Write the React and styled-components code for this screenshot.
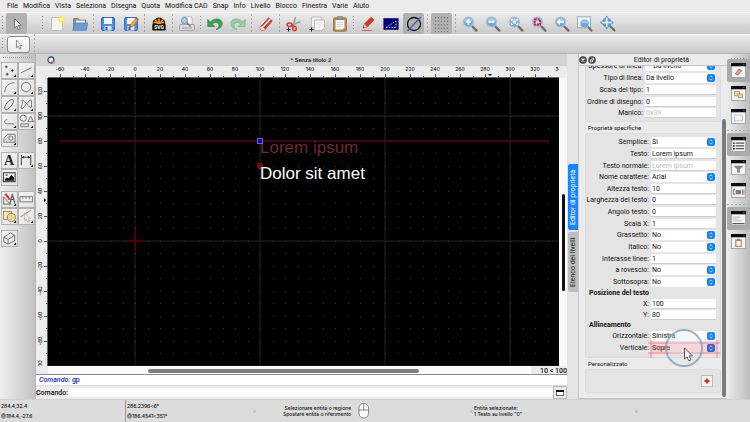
import React from "react";
import styled, { createGlobalStyle, css } from "styled-components";

const GlobalStyle = createGlobalStyle`
  *, *::before, *::after { box-sizing: border-box; }
  html, body { margin: 0; padding: 0; }
  body {
    font-family: Roboto, "Liberation Sans", sans-serif;
    font-size: 7px;
    line-height: 10px;
    color: #111;
    background: #ececec;
  }
  button, input, select { font: inherit; color: inherit; margin: 0; }
`;

const Window = styled.div`
  display: flex;
  flex-direction: column;
  height: 100vh;
  overflow: hidden;
`;

/* ---------- menu and tool bars ---------- */

const MenuBar = styled.nav`
  display: flex;
  gap: 5px;
  flex: none;
  height: 12px;
  padding: 0 7px;
  background: #ebebeb;
`;

const MenuButton = styled.button`
  padding: 0;
  border: 0;
  background: none;
  line-height: 11px;
  white-space: nowrap;
`;

const barSurface = css`
  display: flex;
  align-items: center;
  flex: none;
  background: linear-gradient(#ececec, #c9c9c9);
  border-top: 1px solid #f6f6f6;
`;

const ToolBar = styled.div`
  ${barSurface}
  height: 22px;
`;

const OptionsBar = styled.div`
  ${barSurface}
  height: 20px;
  border-bottom: 1px solid #b4b4b4;
`;

const Handle = styled.span`
  flex: none;
  width: 5px;
  height: ${(p) => (p.$short ? 12 : 15)}px;
  margin-left: ${(p) => (p.$spaced ? 12 : 0)}px;
  background: repeating-linear-gradient(#8e8e8e 0 1px, transparent 1px 3px) center / 1px 100% no-repeat;
`;

const Separator = styled.span`
  flex: none;
  width: 5px;
  height: 20px;
  background: repeating-linear-gradient(#a9a9a9 0 2px, transparent 2px 4px) center / 1px 100% no-repeat;
`;

const ToolButton = styled.button`
  display: grid;
  place-items: center;
  flex: none;
  width: 21px;
  height: 21px;
  margin: 0 1px;
  padding: 0;
  border: 0;
  border-radius: 2px;
  background: ${(p) => (p.$pressed ? "#b1b1b1" : "none")};
`;

const OptionButton = styled.button`
  display: grid;
  place-items: center;
  width: 23px;
  height: 17px;
  margin: 0 2px;
  padding: 0;
  border: 1px solid #8c8c8c;
  border-radius: 3px;
  background: linear-gradient(#ffffff, #e9e9e9);
`;

const Icon = styled.svg`
  display: block;
  width: ${(p) => p.$size || 16}px;
  height: ${(p) => p.$size || 16}px;
  overflow: visible;
`;

/* ---------- workspace ---------- */

const Workspace = styled.main`
  display: flex;
  flex: 1;
  min-height: 0;
`;

const Palette = styled.aside`
  display: flex;
  flex-direction: column;
  gap: 5px;
  flex: none;
  width: 36px;
  padding: 3px 1px 0;
  background: linear-gradient(90deg, #efefef, #c2c2c2);
  border-right: 1px solid #b5b5b5;
`;

const PaletteHandle = styled.span`
  height: 1px;
  margin: 0 2px -1px;
  background: repeating-linear-gradient(90deg, #999 0 1px, transparent 1px 2px);
`;

const PaletteGroup = styled.div`
  display: grid;
  grid-template-columns: 17px 17px;
  grid-auto-rows: 17px;
`;

const PaletteButton = styled.button`
  display: grid;
  place-items: center;
  padding: 0;
  border: 1px solid #b3b3b3;
  background: linear-gradient(135deg, #f4f4f4, #e2e2e2);
`;

const Documents = styled.section`
  display: flex;
  flex-direction: column;
  flex: 1;
  min-width: 0;
  background: #ececec;
`;

const DocumentTitle = styled.header`
  display: grid;
  grid-template-columns: 20px 1fr 12px;
  align-items: center;
  flex: none;
  height: 12px;
  padding-left: 11px;
  background: #d3d3d3;
  font-size: 6px;
  font-weight: 500;
  text-align: center;
`;

const DrawingGrid = styled.div`
  display: grid;
  grid-template: 12px minmax(0, 1fr) / 12px minmax(0, 1fr) 8px;
  flex: 1;
  min-height: 0;
`;

const Ruler = styled.svg`
  display: block;
  width: 100%;
  height: 100%;
  overflow: hidden;
  background: #ededed;
  font-family: Inter, "Liberation Sans", sans-serif;
  font-size: 5px;
  font-weight: 500;
  fill: #222;
`;

const Canvas = styled.svg`
  display: block;
  width: 100%;
  height: 100%;
  overflow: hidden;
  background: #000;
  font-family: "Liberation Sans", Arial, sans-serif;
  font-size: 17px;
`;

const VerticalScroll = styled.div`
  display: flex;
  flex-direction: column;
  padding: 0 2px 0 3px;
  background: #fafafa;
  &::before { content: ""; flex: 116; }
  &::after { content: ""; flex: 75; }
`;

const VerticalThumb = styled.span`
  flex: 97;
  border-radius: 2px;
  background: #111;
`;

const ScrollRow = styled.div`
  display: flex;
  flex: none;
  height: 9px;
  padding-left: 12px;
  border-bottom: 1px solid #8b8b8b;
`;

const HorizontalScroll = styled.div`
  display: flex;
  flex: 1;
  padding: 3px 0 1px;
  background: #fafafa;
  &::before { content: ""; flex: 100; }
  &::after { content: ""; flex: 112; }
`;

const HorizontalThumb = styled.span`
  flex: 271;
  border-radius: 2px;
  background: #7e7e7e;
`;

const GridInfo = styled.span`
  width: 36px;
  font-weight: 500;
  text-align: right;
  white-space: nowrap;
`;

const History = styled.div`
  flex: none;
  height: 10px;
  padding-left: 3px;
  background: #fff;
  color: #1c1cd0;
  font-weight: 500;
  em { font-style: italic; }
`;

const CommandLine = styled.div`
  display: flex;
  align-items: center;
  flex: none;
  height: 14px;
  border-top: 1px solid #ddd;
`;

const CommandLabel = styled.label`
  width: 33px;
  font-weight: 500;
`;

const CommandInput = styled.input`
  flex: 1;
  min-width: 0;
  height: 9px;
  padding: 0 2px;
  border: 0;
  background: #fff;
`;

const CommandButton = styled.button`
  display: grid;
  place-items: center;
  width: 14px;
  height: 13px;
  padding: 0;
  border: 1px solid #b5b5b5;
  background: #ececec;
`;

/* ---------- dock ---------- */

const DockTabs = styled.div`
  display: flex;
  flex-direction: column;
  gap: 2px;
  flex: none;
  width: 11px;
  padding-top: 110px;
  background: #e4e4e4;
`;

const DockTab = styled.button`
  align-self: flex-end;
  width: 10px;
  height: ${(p) => (p.$active ? 66 : 60)}px;
  padding: 0;
  border: 0;
  border-radius: 0 2px 2px 0;
  background: ${(p) => (p.$active ? "#1685ff" : "#bdbdbd")};
  color: ${(p) => (p.$active ? "#fff" : "#222")};
  writing-mode: vertical-rl;
  line-height: 10px;
  transform: rotate(180deg);
  white-space: nowrap;
`;

const Dock = styled.section`
  display: flex;
  flex-direction: column;
  flex: none;
  width: 149px;
  border-left: 1px solid #c8c8c8;
  border-bottom: 1px solid #c4c4c4;
  background: #ebebeb;
`;

const DockTitle = styled.header`
  display: grid;
  grid-template-columns: 17px 1fr;
  align-items: center;
  flex: none;
  height: 12px;
  border-bottom: 1px solid #c3c3c3;
  text-align: center;
`;

const DockButtons = styled.div`
  display: flex;
  gap: 1px;
`;

const DockButton = styled.button`
  padding: 0;
  border: 0;
  background: none;
`;

const DockBody = styled.div`
  display: flex;
  flex: 1;
  min-height: 0;
`;

const Properties = styled.form`
  display: flex;
  flex-direction: column;
  justify-content: flex-end;
  flex: 1;
  min-width: 0;
  padding: 0 0 5px 6px;
  overflow: hidden;
`;

const DockScroll = styled.div`
  display: flex;
  flex-direction: column;
  justify-content: flex-end;
  width: 6px;
  padding: 0 1px 1px;
`;

const DockThumb = styled.span`
  height: 84%;
  border-radius: 2px;
  background: #7c7c7c;
`;

const GroupTitle = styled.h2`
  flex: none;
  height: 11px;
  margin: 0;
  padding: 1px 0 0 3px;
  font-size: 6px;
  font-weight: 400;
`;

const GroupBox = styled.div`
  flex: none;
  padding: 3px 5px 4px 0;
  border-radius: 3px;
  background: #e4e4e4;
  box-shadow: inset 0 0 0 1px #dcdcdc;
`;

const CustomBox = styled(GroupBox)`
  display: flex;
  justify-content: flex-end;
  align-items: center;
  height: 24px;
  padding: 0 8px;
`;

const AddButton = styled.button`
  display: grid;
  place-items: center;
  width: 12px;
  height: 12px;
  padding: 0;
  border: 1px solid #bdbdbd;
  background: #f2f2f2;
`;

const Row = styled.div`
  display: grid;
  grid-template-columns: ${(p) => (p.$narrow ? 60 : 66)}px minmax(0, 1fr);
  align-items: center;
  height: ${(p) => (p.$tight ? 11 : 12)}px;
`;

const RowLabel = styled.label`
  padding-right: 2px;
  text-align: right;
  white-space: nowrap;
`;

const Subheading = styled.h3`
  height: 10px;
  margin: 0;
  padding-left: 4px;
  font-size: 7px;
  font-weight: 700;
`;

const TextField = styled.input`
  width: 100%;
  height: 10px;
  padding: 0 1px;
  border: 0;
  background: #fff;
  box-shadow: inset 0 -1px #cfcfcf;
  &:disabled { color: #bcbcbc; }
`;

const SelectWrap = styled.div`
  display: grid;
  align-items: center;
  position: relative;
  & > * { grid-area: 1 / 1; }
`;

const SelectField = styled.select`
  appearance: none;
  width: 100%;
  height: 10px;
  padding: 0 10px 0 1px;
  border: 0;
  border-radius: 2px;
  background: ${(p) => (p.$hot ? "#ffd0d2" : "#fff")};
`;

const Chevrons = styled.svg`
  justify-self: end;
  width: 8px;
  height: 8px;
  margin-right: 1px;
  pointer-events: none;
`;

const Highlight = styled.svg`
  position: absolute;
  inset: 50% auto auto 50%;
  width: 80px;
  height: 44px;
  margin: -22px 0 0 -40px;
  overflow: visible;
  pointer-events: none;
`;

const SideBar = styled.aside`
  display: flex;
  flex-direction: column;
  align-items: stretch;
  flex: none;
  width: 23px;
  padding-top: 4px;
  background: linear-gradient(90deg, #ececec, #bdbdbd);
`;

const SideHandle = styled.span`
  flex: none;
  height: 1px;
  margin: 0 4px;
  background: repeating-linear-gradient(90deg, #8e8e8e 0 1px, transparent 1px 3px);
`;

const SideSeparator = styled.span`
  flex: none;
  height: 5px;
  background: repeating-linear-gradient(90deg, #aaa 0 2px, transparent 2px 4px) center / 100% 1px no-repeat;
`;

const SideButton = styled.button`
  display: grid;
  place-items: center;
  flex: none;
  height: 23px;
  padding: 0;
  border: 0;
  border-radius: 2px;
  background: ${(p) => (p.$pressed ? "#ababab" : "none")};
`;

/* ---------- status bar ---------- */

const StatusBar = styled.footer`
  display: grid;
  grid-template-columns: 126fr 127fr 217fr 165fr 115fr;
  align-items: stretch;
  flex: none;
  height: 23px;
  background: #dcdcdc;
  border-top: 1px solid #d0d0d0;
  font-family: Inter, "Liberation Sans", sans-serif;
  font-size: 5px;
  font-weight: 500;
`;

const Coordinates = styled.div`
  display: flex;
  flex-direction: column;
  padding: 1px 0 1px 1px;
  border-right: ${(p) => (p.$divided ? 1 : 0)}px solid #999;
  line-height: 10px;
`;

const StatusCell = styled.div`
  display: flex;
  align-items: center;
  line-height: 6px;
  white-space: nowrap;
  &::before {
    content: "";
    flex: none;
    width: 3px;
    height: 3px;
    margin-right: 1px;
    border-radius: 2px;
    background: #c0c0c0;
  }
`;

const MouseHint = styled.div`
  display: flex;
  flex: 1;
  align-items: center;
  gap: 5px;
  padding-left: 26px;
  text-align: right;
`;

/* ---------- drawings ---------- */

const ArrowShape = () => (
  <path d="M5.5 2.5V12l2.3-2 1.6 3.7 1.6-.8-1.7-3.5h3z" fill="#fff" stroke="#666" strokeWidth=".9" />
);

const Lens = ({ children }) => (
  <>
    <path d="M10 10l4.4 4.6" stroke="#6e6e6a" strokeWidth="2.4" strokeLinecap="round" />
    <circle cx="6.4" cy="6" r="5" fill="#72a7e0" stroke="#a9bed2" strokeWidth="1.2" />
    <path d="M2.3 5.6a4.2 4.2 0 0 1 8.2 0z" fill="#a9ccf0" />
    {children}
  </>
);

const Floppy = () => (
  <>
    <rect x="1.5" y="1.5" width="13" height="13" rx="1.5" fill="#4b8fee" stroke="#3368c4" />
    <rect x="4" y="2" width="8" height="6" fill="#f4f7fc" />
    <rect x="4.5" y="10" width="7" height="4.5" fill="#dfe7f2" />
    <rect x="5.5" y="10.8" width="2" height="3.2" fill="#3d5f95" />
  </>
);

const icons = {
  arrow: <ArrowShape />,
  newFile: (
    <>
      <path d="M2.5 1.5h11v13h-11z" fill="#f4f4f1" stroke="#b7b7b3" strokeWidth=".8" />
      <circle cx="12.5" cy="3.5" r="3.2" fill="#f6ee2c" opacity=".9" />
      <circle cx="12.5" cy="3.5" r="1.5" fill="#fffde0" />
    </>
  ),
  open: (
    <>
      <path d="M1.5 13V2.5h5l1 1.5h6.5v9z" fill="#8b9095" stroke="#6f7479" strokeWidth=".7" />
      <path d="M4 4.5h9v4H4z" fill="#eee" />
      <path d="M.8 14.3L3 7h12.7l-1.4 7.3z" fill="#6a9fd6" stroke="#4b7db5" strokeWidth=".7" />
    </>
  ),
  save: <Floppy />,
  saveAs: (
    <>
      <Floppy />
      <path d="M6.5 11.5l.9-3L13.3 1.8l2.2 1.8-6 7z" fill="#f5a833" stroke="#b8651a" strokeWidth=".6" />
      <path d="M13.3 1.8l2.2 1.8-.9 1-2.2-1.8z" fill="#e05745" />
      <path d="M6.5 11.5l.5-1.6 1.1 1z" fill="#333" />
    </>
  ),
  svgExport: (
    <>
      <path d="M8 1.5c2 0 3 .8 3.500 2 2 .2 3 1.500 2.700 3.500v1.500H1.800V7c-.3-2 .7-3.300 2.700-3.500C5 2.300 6 1.500 8 1.500z" fill="#111" />
      <path d="M8 2.500V8M4.500 3.800L7 8M11.500 3.800L9 8M2.500 6.500h3M10.500 6.500h3" stroke="#f79c1d" strokeWidth="1.700" />
      <rect x="1.300" y="8" width="13.400" height="6.500" rx="1.200" fill="#111" />
      <text x="8" y="13" fontSize="5" fontWeight="700" textAnchor="middle" fill="#fff">SVG</text>
    </>
  ),
  preview: (
    <>
      <path d="M4 1h9v8H4z" fill="#fafafa" stroke="#aaa" strokeWidth=".7" />
      <path d="M1 8.500h14l.6 4.500c0 1-.4 1.500-1.500 1.500H2c-1 0-1.500-.5-1.500-1.500z" fill="#dcdcdc" stroke="#8f8f8f" strokeWidth=".7" />
      <path d="M3 12h10" stroke="#999" />
      <path d="M7.500 6.500l4 4" stroke="#777" strokeWidth="1.500" />
      <circle cx="5.500" cy="4.500" r="3" fill="#a9ccf1" stroke="#6f8cae" />
    </>
  ),
  undo: <path d="M.8 3.500v7h7L5.400 8.100c2.500-2.700 6.400-2.100 6.600 1.100.1 1.700-1 3-3 4.300 4-.6 6.400-3 6.200-6.200C14.900 2.700 8.200.8 3.300 6z" fill="#3fa452" stroke="#26803a" strokeWidth=".7" />,
  redo: <path d="M15.200 3.500v7h-7l2.400-2.400C8.100 5.400 4.200 6 4 9.200c-.1 1.700 1 3 3 4.300C3 12.900.6 10.500.8 7.300 1.100 2.700 7.800.8 12.700 6z" fill="#96cfa7" stroke="#6bb382" strokeWidth=".7" />,
  eraser: (
    <>
      <path d="M2 11.500L10.500 2l3.800 2.800L6.500 14l-3.500.3z" fill="#dc3535" stroke="#a92020" strokeWidth=".7" />
      <path d="M4 11.800l8.300-8.600" stroke="#fff" strokeWidth="1.500" />
      <path d="M2 11.500l1-1 4 2.500-.6 1-3.500.3z" fill="#f7dada" />
    </>
  ),
  cut: (
    <>
      <path d="M5 9.500L14.500 5.500M7 10.500L9.500 1" stroke="#a3a3a3" strokeWidth="1.600" />
      <ellipse cx="3.500" cy="8.800" rx="2.500" ry="1.700" fill="none" stroke="#d33" strokeWidth="1.500" />
      <ellipse cx="8.500" cy="12.500" rx="1.700" ry="2.300" fill="none" stroke="#d33" strokeWidth="1.500" />
      <path d="M5.500 9.500l2.500 1" stroke="#d33" strokeWidth="1.500" />
      <path d="M.5 13.500h4M2.500 11.500v4" stroke="#222" />
    </>
  ),
  copy: (
    <>
      <path d="M2.500 1h10v10h-10z" fill="#f2f2f2" stroke="#b4b4b4" strokeWidth=".8" />
      <path d="M5.500 4h10v7.500l-3 3h-7z" fill="#fdfdfd" stroke="#aaa" strokeWidth=".8" />
      <path d="M7.500 7h6M7.500 9h5M7.500 11h4" stroke="#ccc" strokeWidth=".7" />
      <path d="M.5 13.500h4M2.500 11.500v4" stroke="#222" />
    </>
  ),
  paste: (
    <>
      <rect x="1.500" y="1.800" width="13" height="13.500" rx="1" fill="#b18a4d" stroke="#8a6a38" strokeWidth=".7" />
      <path d="M3.500 4h9v7.500l-2 2h-7z" fill="#f8f8f5" />
      <path d="M5 6.500h6M5 8.500h6M5 10.500h4" stroke="#c4c4c4" strokeWidth=".7" />
      <rect x="5" y=".5" width="6" height="3" rx="1" fill="#989898" stroke="#6c6c6c" strokeWidth=".5" />
    </>
  ),
  pencil: (
    <>
      <path d="M3 12l1.300-4L11 1.300l3 2.500L7.300 11z" fill="#dc3529" stroke="#a3211a" strokeWidth=".6" />
      <path d="M3 12l1.300-4L7.300 11z" fill="#f1c69a" />
      <path d="M3 12l.5-1.500 1.200.9z" fill="#222" />
      <path d="M2 14.500h10" stroke="#c44" strokeWidth=".8" />
    </>
  ),
  screen: (
    <>
      <rect x=".8" y="2.500" width="14.400" height="11" fill="#00007c" stroke="#22224a" strokeWidth=".7" />
      <path d="M3 11.500h10M3 11.500L13 5M13 5v6.500" stroke="#c9cfff" strokeWidth=".9" strokeDasharray="1.500 1.200" fill="none" />
    </>
  ),
  draft: (
    <>
      <circle cx="8" cy="8" r="6.500" fill="none" stroke="#111" strokeWidth="1.300" />
      <path d="M1.500 15L15 1" stroke="#4747d6" strokeWidth="1.100" />
    </>
  ),
  grid: (
    <path
      d="M1.500 1v15M4.500 1v15M7.500 1v15M10.500 1v15M13.500 1v15"
      stroke="#6d6d6d"
      strokeWidth=".9"
      strokeDasharray="1.500 2"
    />
  ),
  zoomIn: <Lens><path d="M6.400 3.300v5.400M3.700 6h5.400" stroke="#fff" strokeWidth="1.500" /></Lens>,
  zoomOut: <Lens><path d="M3.500 6h5.800" stroke="#fff" strokeWidth="1.700" /></Lens>,
  zoomAuto: (
    <Lens>
      <path d="M3.500 5V3.500H5M8 3.500h1.500V5M9.500 7v1.500H8M5 8.500H3.500V7M5.500 5.500h2v1.500h-2z" fill="none" stroke="#fff" strokeWidth="1.100" />
    </Lens>
  ),
  zoomSelection: (
    <Lens>
      <path d="M3.800 3.500h5.200v5H3.800z" fill="#c6dcf3" stroke="#df1837" strokeWidth="1.800" strokeDasharray="2 .8" />
    </Lens>
  ),
  zoomPrevious: <Lens><path d="M10 6H5" stroke="#fff" strokeWidth="2" /><path d="M2.600 6L6 3v6z" fill="#fff" /></Lens>,
  zoomWindow: (
    <>
      <rect x=".5" y=".8" width="13" height="11" fill="#f5f8fb" stroke="#8dabc9" />
      <path d="M11 11l3.500 3.500" stroke="#6e6e6a" strokeWidth="2.200" strokeLinecap="round" />
      <circle cx="7.600" cy="7.800" r="4.300" fill="#6fa5de" stroke="#b2c7da" />
      <path d="M4 7.300a3.700 3.700 0 0 1 7.200 0z" fill="#9fc4ea" />
    </>
  ),
  pan: (
    <>
      <path d="M9.500 9.500l5 5" stroke="#6e6e6a" strokeWidth="2.300" strokeLinecap="round" />
      <circle cx="6.800" cy="6.500" r="4.800" fill="#5f98d6" />
      <path d="M6.800 1v11M1.300 6.500h11" stroke="#fff" strokeWidth="1.300" />
      <path d="M6.800-.5l1.800 2.300H5zM6.800 13.500l1.800-2.300H5zM-.2 6.500l2.300-1.800v3.600zM13.800 6.500l-2.300-1.800v3.600z" fill="#5f98d6" />
    </>
  ),
};

const stroke = { fill: "none", stroke: "#626262", strokeWidth: 0.9 };
const corner = <path d="M15 12.200V15h-2.800z" fill="#111" />;

const paletteIcons = {
  point: <><path d="M3 4h3M4.500 2.500v3M9.500 8h3M11 6.500v3M4 12h3M5.500 10.500v3" stroke="#333" strokeWidth=".9" />{corner}</>,
  line: <><path d="M2 10.500L13.500 5" {...stroke} />{corner}</>,
  arc: <><path d="M3 13C3 7 7 3 13 3" {...stroke} />{corner}</>,
  circle: <><circle cx="7.500" cy="7.500" r="5" {...stroke} />{corner}</>,
  ellipse: <><ellipse cx="7.500" cy="8" rx="6.500" ry="2.800" transform="rotate(-50 7.500 8)" {...stroke} />{corner}</>,
  spline: <><path d="M3 3.500C5 2 6.500 7 8 7s2.500-4 4.500-4c1.500 1 .5 4.500 1 7.500-1.500 3-4-2.500-5.500-3.500C6.500 8.500 4.500 13.500 2.500 12 1.500 10 5 6.500 3 3.500z" {...stroke} />{corner}</>,
  polyline: <><path d="M12.500 10.500H6C1.500 10.500 2 6 5.500 6" {...stroke} />{corner}</>,
  shapes: <><circle cx="4.500" cy="4.500" r="3.300" {...stroke} /><path d="M9.500 8l3-5.500 2.800 5.500z" {...stroke} /><path d="M2 10.500h8v3H2z" {...stroke} />{corner}</>,
  hatch: (
    <>
      <path d="M2 12V8l4-4.500h8V12z" {...stroke} />
      <circle cx="9.500" cy="7.500" r="2.200" {...stroke} />
      <path d="M2.500 10.500l6-6.500M4 12l3.500-4M9 12l4.500-5M11.500 12l2-2" stroke="#999" strokeWidth=".6" />
      {corner}
    </>
  ),
  text: <text x="7.500" y="13" fontFamily="Liberation Serif, serif" fontSize="15" fontWeight="700" textAnchor="middle" fill="#222">A</text>,
  dimension: <><path d="M2.500 13V2M12.500 13V2M3 4.500h9" stroke="#333" fill="none" /><path d="M3 4.500l2.500-1.700v3.400zM12 4.500L9.500 2.800v3.400z" fill="#333" />{corner}</>,
  image: <><rect x="1.500" y="3" width="12.500" height="9.500" fill="#f4f4f4" stroke="#222" /><path d="M3 11.500V9.500l2-1.500 2 1 3-4 2.700 3v3.500z" fill="#111" /><path d="M4 5.500h2" stroke="#111" /></>,
  modify: (
    <>
      <path d="M1.500 13V5l7.500 8z" fill="#e1e1e1" stroke="#555" strokeWidth=".8" />
      <path d="M2.500 2.500l2-1.300 5 6.500-2 1.200z" fill="#d9352e" />
      <path d="M11 2l-2.500 11M11 2l2.700 10M9.500 8h3.500" {...stroke} strokeWidth="1.300" />
      {corner}
    </>
  ),
  measure: <><path d="M1 5h13.500v5.500H1z" fill="#ededed" stroke="#666" strokeWidth=".9" /><path d="M4 5v2.500M7.500 5v2.500M11 5v2.500" stroke="#777" strokeWidth=".7" /></>,
  block: (
    <>
      <rect x="1.500" y="2.500" width="8.500" height="8.500" fill="#f6e7b6" stroke="#876f45" strokeWidth=".8" />
      <circle cx="10" cy="9" r="4.300" fill="#ead694" fillOpacity=".75" stroke="#876f45" strokeWidth=".8" />
      {corner}
    </>
  ),
  select: <><path d="M1.500 8.500L12.500 1.500" stroke="#e55" strokeWidth="1" /><path d="M6 4.500v8l2-1.500 1.500 3 1.300-.7-1.400-2.800H12z" fill="#f8f8f8" stroke="#999" strokeWidth=".7" />{corner}</>,
  solid: <><path d="M2 6.500L9 2l4.500 2.500v6L6.500 14 2 11.500zM2 6.500L6.500 9l7-4.500M6.500 9v5" {...stroke} />{corner}</>,
};

const Panel = ({ children }) => (
  <>
    <rect x=".5" y=".5" width="15" height="15" fill="#f5f5f5" stroke="#a4a4a4" />
    <path d="M0 0h16v3.500H0z" fill="#0d0d0d" />
    <path d="M13 1.800h1.500" stroke="#888" strokeWidth=".8" />
    {children}
  </>
);

const panelIcons = {
  properties: <Panel><path d="M4.500 11.500l4-5 3 1.500-4 5z" fill="#e89a98" stroke="#9d4b4b" strokeWidth=".7" /></Panel>,
  blocks: <Panel><rect x="4" y="6" width="5" height="4.500" fill="#eedda2" stroke="#907947" strokeWidth=".7" /><rect x="7.500" y="8.500" width="4.500" height="4" fill="#eedda2" stroke="#907947" strokeWidth=".7" /></Panel>,
  views: <Panel><rect x="3.500" y="6.500" width="9" height="6" fill="#f0f5fa" stroke="#a9c1d9" strokeWidth=".8" /></Panel>,
  layers: <Panel><path d="M2 6.500h2M2 9.500h2M2 12.500h2" stroke="#111" strokeWidth="1.500" /><path d="M5 6.500h9M5 9.500h9M5 12.500h9" stroke="#222" /></Panel>,
  filter: <Panel><path d="M3.500 6h9v1.500L9.500 9.500V13.500h-3v-4l-3-2z" fill="#8b8b8b" /></Panel>,
  library: <Panel><path d="M4.500 7H2.500v5h2M12 7v5.500M13.800 7v5.500" {...stroke} /><rect x="5" y="7.500" width="5.500" height="4.500" fill="#777" /><path d="M6 9.800h2" stroke="#e66" /></Panel>,
  commands: <Panel><path d="M2 6.500h8M2 8.500h6M2 10.500h9" stroke="#aaa" strokeWidth=".8" /><path d="M1.500 13.500h13" stroke="#555" strokeWidth="1.300" /></Panel>,
  clipboard: <Panel><rect x="4.500" y="5.800" width="7" height="8" fill="#b18a4d" /><rect x="5.800" y="7.500" width="4.500" height="5" fill="#fbfbfb" /><rect x="6.500" y="5" width="3" height="1.800" fill="#888" /></Panel>,
};

/* ---------- drawing space: 12.5 px for every 10 units ---------- */

const ORIGIN_X = 87;
const ORIGIN_Y = 163;
const toX = (units) => ORIGIN_X + Math.round(units * 1.25);
const toY = (units) => ORIGIN_Y - Math.round(units * 1.25);
const steps = (from, to, by) => Array.from({ length: Math.floor((to - from) / by) + 1 }, (_, i) => from + i * by);

/* Measures an element and returns its ref with its present size. */
function useSize() {
  const ref = React.useRef(null);
  const [size, setSize] = React.useState({ width: 0, height: 0 });
  React.useLayoutEffect(() => {
    const measure = () => {
      const box = ref.current.getBoundingClientRect();
      setSize({ width: box.width, height: box.height });
    };
    measure();
    const observer = new ResizeObserver(measure);
    observer.observe(ref.current);
    return () => observer.disconnect();
  }, []);
  return [ref, size];
}

const visibleX = (width) => steps(-60, 3000, 10).filter((x) => toX(x) < width + 2);
const visibleY = (height) => steps(-2000, 120, 10).filter((y) => toY(y) <= height);

function TopRuler() {
  const [ref, { width }] = useSize();
  const marks = visibleX(width);
  return (
    <Ruler ref={ref} aria-label="Righello orizzontale">
      <path d={`M0 11.500H${width}`} stroke="#666" />
      {marks.map((x) => (
        <path key={x} d={`M${toX(x)}.5 ${x % 20 ? 10 : 8}V12`} stroke="#555" />
      ))}
      {marks.filter((x) => x % 20 === 0).map((x) => (
        <text key={x} x={toX(x)} y="5" textAnchor="middle">{x}</text>
      ))}
      <path d="M440 8h4l-2 2z" fill="#000" />
    </Ruler>
  );
}

function SideRuler() {
  const [ref, { height }] = useSize();
  const marks = visibleY(height);
  return (
    <Ruler ref={ref} aria-label="Righello verticale">
      <path d={`M11.500 0V${height}`} stroke="#666" />
      {marks.map((y) => (
        <path key={y} d={`M${y % 20 ? 10 : 8} ${toY(y)}.5H12`} stroke="#555" />
      ))}
      {marks.filter((y) => y % 20 === 0).map((y) => (
        <text key={y} transform={`translate(6 ${toY(y)}) rotate(-90)`} textAnchor="middle">{y}</text>
      ))}
      <path d="M8 120v4l2-2z" fill="#000" />
    </Ruler>
  );
}

function Drawing() {
  const [ref, { width, height }] = useSize();
  const xs = visibleX(width);
  const ys = visibleY(height);
  const dots = xs.flatMap((x) => ys.map((y) => `M${toX(x)} ${toY(y)}h1`)).join("");
  const lines =
    xs.filter((x) => x % 100 === 0).map((x) => `M${toX(x)} 0V${height}`).join("") +
    ys.filter((y) => y % 100 === 0).map((y) => `M0 ${toY(y)}H${width}`).join("");
  return (
    <Canvas ref={ref} aria-label="Disegno">
      <path d={lines} stroke="#121212" strokeWidth="2" />
      <path d={dots} stroke="#3b3b3b" transform="translate(0 .5)" />
      <path d="M12 63h488" stroke="#500000" strokeWidth="2" />
      <path d="M77 163h20M87 153v20" stroke="#4c0000" strokeWidth="2" />
      <circle cx="212" cy="88" r="2.500" fill="#700" stroke="#a11" />
      <text x="212" y="75" fill="#6e2b2b">Lorem ipsum</text>
      <text x="212" y="101" fill="#fff">Dolor sit amet</text>
      <rect x="209.500" y="60.500" width="5" height="5" fill="#0c00b4" stroke="#6767c4" />
    </Canvas>
  );
}

/* ---------- data ---------- */

const menus = ["File", "Modifica", "Vista", "Seleziona", "Disegna", "Quota", "Modifica CAD", "Snap", "Info", "Livello", "Blocco", "Finestra", "Varie", "Aiuto"];

const tools = [
  { handle: true }, { icon: "arrow", label: "Selezione", pressed: true },
  { handle: true, spaced: true }, { icon: "newFile", label: "Nuovo" }, { icon: "open", label: "Apri" },
  {}, { icon: "save", label: "Salva" }, { icon: "saveAs", label: "Salva con nome" },
  {}, { icon: "svgExport", label: "Esporta SVG" },
  {}, { icon: "preview", label: "Anteprima di stampa" },
  { handle: true }, { icon: "undo", label: "Annulla" }, { icon: "redo", label: "Ripeti" },
  {}, { icon: "eraser", label: "Elimina" },
  {}, { icon: "cut", label: "Taglia" }, { icon: "copy", label: "Copia" }, { icon: "paste", label: "Incolla" },
  { handle: true }, { icon: "pencil", label: "Penna" }, { icon: "screen", label: "Linee schermo" }, { icon: "draft", label: "Modo bozza", pressed: true },
  {}, { icon: "grid", label: "Griglia", pressed: true },
  {}, { icon: "zoomIn", label: "Ingrandisci" }, { icon: "zoomOut", label: "Riduci" }, { icon: "zoomAuto", label: "Zoom automatico" },
  { icon: "zoomSelection", label: "Zoom selezione" }, { icon: "zoomPrevious", label: "Vista precedente" },
  { icon: "zoomWindow", label: "Zoom finestra" }, { icon: "pan", label: "Panoramica" },
];

const paletteGroups = [
  [["point", "Punto"], ["line", "Linea"], ["arc", "Arco"], ["circle", "Cerchio"], ["ellipse", "Ellisse"], ["spline", "Spline"], ["polyline", "Polilinea"], ["shapes", "Forme"], ["hatch", "Tratteggio"]],
  [["text", "Testo"], ["dimension", "Quota"], ["image", "Immagine"]],
  [["modify", "Modifica"], ["measure", "Misura"], ["block", "Blocco"], ["select", "Seleziona"]],
  [["solid", "Proiezione"]],
];

const panels = [
  { icon: "properties", label: "Proprietà", pressed: true }, { icon: "blocks", label: "Blocchi" }, { icon: "views", label: "Viste" },
  {}, { icon: "layers", label: "Livelli", pressed: true }, { icon: "filter", label: "Filtro" }, { icon: "library", label: "Libreria" },
  {}, { icon: "commands", label: "Comandi", pressed: true }, { icon: "clipboard", label: "Appunti" },
];

const generalRows = [
  { label: "Spessore di linea:", value: "— Da livello", choice: true },
  { label: "Tipo di linea:", value: "Da livello", choice: true },
  { label: "Scala del tipo:", value: "1" },
  { label: "Ordine di disegno:", value: "0", tight: true },
  { label: "Manico:", value: "0x39", disabled: true, tight: true },
];

const specificRows = [
  { label: "Semplice:", value: "Sì", choice: true },
  { label: "Testo:", value: "Lorem ipsum" },
  { label: "Testo normale:", value: "Lorem ipsum", disabled: true, tight: true },
  { label: "Nome carattere:", value: "Arial", choice: true },
  { label: "Altezza testo:", value: "10", tight: true },
  { label: "Larghezza del testo:", value: "0" },
  { label: "Angolo testo:", value: "0" },
  { label: "Scala X:", value: "1", tight: true },
  { label: "Grassetto:", value: "No", choice: true },
  { label: "Italico:", value: "No", choice: true },
  { label: "Interasse linee:", value: "1", tight: true },
  { label: "a rovescio:", value: "No", choice: true },
  { label: "Sottosopra:", value: "No", choice: true },
  { heading: "Posizione del testo" },
  { label: "X:", value: "100", tight: true },
  { label: "Y:", value: "80", tight: true },
  { heading: "Allineamento" },
  { label: "Orizzontale:", value: "Sinistra", choice: true },
  { label: "Verticale:", value: "Sopra", choice: true, hot: true },
];

/* ---------- components ---------- */

const PointerHighlight = () => (
  <Highlight viewBox="0 0 80 44" aria-hidden="true">
    <path d="M4 17h72M4 27h72M7 14v18M73 14v18" stroke="#ff6262" strokeOpacity=".75" strokeWidth="1" fill="none" />
    <circle cx="40" cy="22" r="18" fill="#dfe9f2" fillOpacity=".3" stroke="#8099b3" strokeOpacity=".75" strokeWidth="2" />
    <path d="M40.500 22v11l2.500-2.200 1.900 4 2-.9-1.900-4h3.500z" fill="#fff" stroke="#333" strokeWidth=".8" />
  </Highlight>
);

function PropertyRow({ row, narrow }) {
  const id = React.useId();
  if (row.heading) return <Subheading>{row.heading}</Subheading>;
  return (
    <Row $narrow={narrow} $tight={row.tight}>
      <RowLabel htmlFor={id}>{row.label}</RowLabel>
      {row.choice ? (
        <SelectWrap>
          <SelectField id={id} $hot={row.hot} defaultValue={row.value}>
            <option>{row.value}</option>
          </SelectField>
          <Chevrons viewBox="0 0 8 8" aria-hidden="true">
            <rect width="8" height="8" rx="2" fill={row.hot ? "#2e62dd" : "#0a80ff"} />
            <path d="M2.500 3.200L4 1.800l1.500 1.400M2.500 4.800L4 6.200l1.500-1.400" fill="none" stroke="#fff" strokeWidth=".8" />
          </Chevrons>
          {row.hot && <PointerHighlight />}
        </SelectWrap>
      ) : (
        <TextField id={id} type="text" defaultValue={row.value} disabled={row.disabled} />
      )}
    </Row>
  );
}

function MainToolBar() {
  return (
    <ToolBar role="toolbar">
      {tools.map((t, i) => {
        if (t.handle) return <Handle key={i} $spaced={t.spaced} />;
        if (!t.icon) return <Separator key={i} />;
        return (
          <ToolButton key={i} type="button" aria-label={t.label} $pressed={t.pressed}>
            <Icon viewBox="0 0 16 16">{icons[t.icon]}</Icon>
          </ToolButton>
        );
      })}
    </ToolBar>
  );
}

function PropertyDock() {
  return (
    <Dock>
      <DockTitle>
        <DockButtons>
          <DockButton type="button" aria-label="Chiudi">
            <Icon $size={8} viewBox="0 0 8 8"><circle cx="4" cy="4" r="3.800" fill="#444" /><path d="M2.500 2.500l3 3M5.500 2.500l-3 3" stroke="#fff" strokeWidth="1.200" /></Icon>
          </DockButton>
          <DockButton type="button" aria-label="Sgancia">
            <Icon $size={8} viewBox="0 0 8 8"><circle cx="4" cy="4" r="3.800" fill="#444" /><path d="M2.300 3.800h2.200v2H2.300zM3.500 2.300h2.200v2" fill="none" stroke="#fff" strokeWidth=".8" /></Icon>
          </DockButton>
        </DockButtons>
        <span>Editor di proprietà</span>
      </DockTitle>
      <DockBody>
        <Properties>
          <GroupBox>{generalRows.map((r) => <PropertyRow key={r.label} row={r} narrow />)}</GroupBox>
          <GroupTitle>Proprietà specifiche</GroupTitle>
          <GroupBox>{specificRows.map((r) => <PropertyRow key={r.label || r.heading} row={r} />)}</GroupBox>
          <GroupTitle>Personalizzato</GroupTitle>
          <CustomBox>
            <AddButton type="button" aria-label="Aggiungi">
              <Icon $size={8} viewBox="0 0 8 8"><path d="M4 1.500v5M1.500 4h5" stroke="#cf2a2a" strokeWidth="1.800" /></Icon>
            </AddButton>
          </CustomBox>
        </Properties>
        <DockScroll><DockThumb /></DockScroll>
      </DockBody>
    </Dock>
  );
}

export default function App() {
  return (
    <Window>
      <GlobalStyle />
      <MenuBar>{menus.map((m) => <MenuButton key={m} type="button">{m}</MenuButton>)}</MenuBar>
      <MainToolBar />
      <OptionsBar>
        <Handle $short />
        <OptionButton type="button" aria-label="Selezione"><Icon $size={13} viewBox="0 0 16 16"><ArrowShape /></Icon></OptionButton>
        <Separator />
      </OptionsBar>

      <Workspace>
        <Palette>
          <PaletteHandle />
          {paletteGroups.map((group) => (
            <PaletteGroup key={group[0][0]}>
              {group.map(([icon, label]) => (
                <PaletteButton key={icon} type="button" aria-label={label}>
                  <Icon $size={15} viewBox="0 0 16 16">{paletteIcons[icon]}</Icon>
                </PaletteButton>
              ))}
            </PaletteGroup>
          ))}
        </Palette>

        <Documents>
          <DocumentTitle>
            <Icon $size={8} viewBox="0 0 8 8">
              <circle cx="4" cy="4" r="3" fill="#e9eefb" stroke="#334a86" strokeWidth="1.300" />
              <path d="M4.500 4.500l2.800 2.800" stroke="#d8982c" strokeWidth="1.300" />
            </Icon>
            <span>* Senza titolo 2</span>
          </DocumentTitle>
          <DrawingGrid>
            <span />
            <TopRuler />
            <span />
            <SideRuler />
            <Drawing />
            <VerticalScroll><VerticalThumb /></VerticalScroll>
          </DrawingGrid>
          <ScrollRow>
            <HorizontalScroll><HorizontalThumb /></HorizontalScroll>
            <GridInfo>10 &lt; 100</GridInfo>
          </ScrollRow>
          <History><em>Comando:</em> gp</History>
          <CommandLine>
            <CommandLabel htmlFor="command">Comando:</CommandLabel>
            <CommandInput id="command" type="text" />
            <CommandButton type="button" aria-label="Mostra cronologia">
              <Icon $size={8} viewBox="0 0 8 8"><rect x=".5" y="1.500" width="7" height="5" fill="#fff" stroke="#666" /><path d="M0 2h8" stroke="#111" strokeWidth="2" /></Icon>
            </CommandButton>
          </CommandLine>
        </Documents>

        <DockTabs>
          <DockTab type="button" $active>Editor di proprietà</DockTab>
          <DockTab type="button">Elenco dei livelli</DockTab>
        </DockTabs>
        <PropertyDock />

        <SideBar>
          <SideHandle />
          {panels.map((p, i) =>
            p.icon ? (
              <SideButton key={i} type="button" aria-label={p.label} $pressed={p.pressed}>
                <Icon $size={15} viewBox="0 0 16 16">{panelIcons[p.icon]}</Icon>
              </SideButton>
            ) : (
              <SideSeparator key={i} />
            )
          )}
        </SideBar>
      </Workspace>

      <StatusBar>
        <Coordinates $divided><span>284.4,32.4</span><span>@184.4,-27.6</span></Coordinates>
        <Coordinates><span>286.2396&lt;6°</span><span>@186.4541&lt;351°</span></Coordinates>
        <StatusCell>
          <MouseHint>
            <span>Selezionare entità o regione<br />Spostare entità o riferimento</span>
            <Icon viewBox="0 0 16 16" aria-hidden="true">
              <rect x="3" y=".5" width="9.500" height="14.500" rx="4.500" fill="#fff" stroke="#777" strokeWidth=".9" />
              <path d="M3 7h9.500M7.800.5V7" stroke="#777" strokeWidth=".9" />
            </Icon>
          </MouseHint>
        </StatusCell>
        <StatusCell><span>Entità selezionate:<br />1 Testo su livello "0"</span></StatusCell>
        <StatusCell />
      </StatusBar>
    </Window>
  );
}
